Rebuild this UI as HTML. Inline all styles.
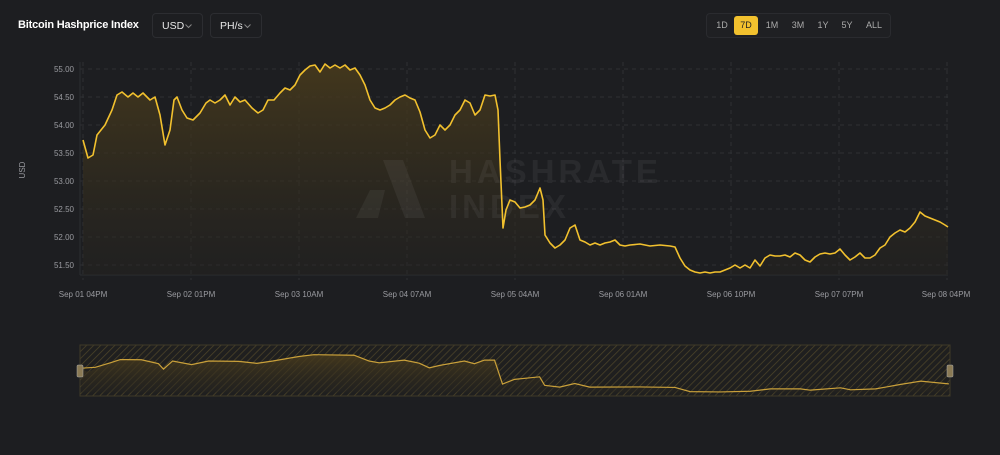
<!DOCTYPE html>
<html><head><meta charset="utf-8"><style>
body{margin:0;width:1000px;height:455px;background:#1d1e21;font-family:"Liberation Sans",sans-serif;overflow:hidden;position:relative;color:#fff}
.t{position:absolute;left:18px;top:19px;font-size:11px;font-weight:bold;letter-spacing:-0.2px}
.dd{position:absolute;top:13px;height:25px;border:1px solid #2c2d31;border-radius:4px;font-size:10.5px;line-height:24px;color:#e8e8e8;padding-left:9px;box-sizing:border-box}
.dd svg{position:absolute;right:10px;top:10px}
.rg{position:absolute;left:706px;top:13px;width:185px;height:25px;border:1px solid #2a2b2f;border-radius:4px;box-sizing:border-box;background:#1f2023}
.rg div{position:absolute;top:2px;height:19px;line-height:19px;font-size:9px;color:#aaa;text-align:center}
.rg .a{background:#f2c12e;color:#222;border-radius:3px}
</style></head><body>
<div class="t">Bitcoin Hashprice Index</div>
<div class="dd" style="left:152px;width:51px">USD<svg width="7" height="5"><polyline points="0.5,0.5 3.5,3.5 6.5,0.5" fill="none" stroke="#888" stroke-width="1"/></svg></div>
<div class="dd" style="left:210px;width:52px">PH/s<svg width="7" height="5"><polyline points="0.5,0.5 3.5,3.5 6.5,0.5" fill="none" stroke="#888" stroke-width="1"/></svg></div>
<div class="rg">
<div style="left:5px;width:20px">1D</div>
<div class="a" style="left:27px;width:24px">7D</div>
<div style="left:55px;width:20px">1M</div>
<div style="left:80px;width:22px">3M</div>
<div style="left:106px;width:20px">1Y</div>
<div style="left:130px;width:20px">5Y</div>
<div style="left:154px;width:26px">ALL</div>
</div>
<svg width="1000" height="455" style="position:absolute;left:0;top:0" font-family="Liberation Sans, sans-serif">
<defs>
<linearGradient id="g" x1="0" y1="0" x2="0" y2="1"><stop offset="0" stop-color="#4a3c1c" stop-opacity="0.85"/><stop offset="1" stop-color="#26241f" stop-opacity="0.4"/></linearGradient>
<pattern id="h" width="5" height="5" patternUnits="userSpaceOnUse" patternTransform="rotate(45)"><rect width="5" height="5" fill="#1f1f1f"/><line x1="0" y1="0" x2="0" y2="5" stroke="#4d4429" stroke-width="1.5"/></pattern>
<pattern id="h2" width="5" height="5" patternUnits="userSpaceOnUse" patternTransform="rotate(45)"><rect width="5" height="5" fill="#3f351c"/><line x1="0" y1="0" x2="0" y2="5" stroke="#5a4b24" stroke-width="1.5"/></pattern>
</defs>
<g stroke="#2f3034" stroke-dasharray="4,4" stroke-width="1">
<line x1="80" x2="948" y1="69" y2="69"/><line x1="80" x2="948" y1="97" y2="97"/><line x1="80" x2="948" y1="125" y2="125"/><line x1="80" x2="948" y1="153" y2="153"/><line x1="80" x2="948" y1="181" y2="181"/><line x1="80" x2="948" y1="209" y2="209"/><line x1="80" x2="948" y1="237" y2="237"/><line x1="80" x2="948" y1="265" y2="265"/>
<line x1="83" x2="83" y1="62" y2="280"/><line x1="191" x2="191" y1="62" y2="280"/><line x1="299" x2="299" y1="62" y2="280"/><line x1="407" x2="407" y1="62" y2="280"/><line x1="515" x2="515" y1="62" y2="280"/><line x1="623" x2="623" y1="62" y2="280"/><line x1="731" x2="731" y1="62" y2="280"/><line x1="839" x2="839" y1="62" y2="280"/><line x1="947" x2="947" y1="62" y2="280"/>
</g>
<line x1="80" x2="80" y1="62" y2="275" stroke="#2c2d31"/><line x1="80" x2="948" y1="275" y2="275" stroke="#2c2d31"/>
<g fill="#9a9ba0" font-size="8" text-anchor="end">
<text x="74" y="72">55.00</text><text x="74" y="100">54.50</text><text x="74" y="128">54.00</text><text x="74" y="156">53.50</text><text x="74" y="184">53.00</text><text x="74" y="212">52.50</text><text x="74" y="240">52.00</text><text x="74" y="268">51.50</text>
</g>
<text x="25" y="170" fill="#9a9ba0" font-size="8" text-anchor="middle" transform="rotate(-90 25 170)">USD</text>
<g fill="#9a9ba0" font-size="8" text-anchor="middle">
<text x="83" y="297">Sep 01 04PM</text><text x="191" y="297">Sep 02 01PM</text><text x="299" y="297">Sep 03 10AM</text><text x="407" y="297">Sep 04 07AM</text><text x="515" y="297">Sep 05 04AM</text><text x="623" y="297">Sep 06 01AM</text><text x="731" y="297">Sep 06 10PM</text><text x="839" y="297">Sep 07 07PM</text><text x="946" y="297">Sep 08 04PM</text>
</g>
<path id="fillp" fill="url(#g)" d="M83,275 L83,140 88,158 93,155 97,135 105,125 112,110 117,95 122,92 128,97 133,93 138,97 143,93 150,100 155,97 160,115 165,145 170,130 174,100 177,97 182,110 187,118 193,120 200,113 206,103 210,100 215,103 220,100 225,95 230,105 235,97 240,102 245,100 252,108 258,113 263,110 268,100 274,100 280,93 285,88 290,90 295,85 300,75 305,70 310,66 315,65 320,72 325,64 330,68 335,65 340,68 345,65 350,70 355,68 360,75 365,85 370,100 375,108 380,110 385,108 390,105 395,100 400,97 405,95 410,98 415,100 420,112 425,130 430,138 435,135 440,125 445,130 450,125 455,115 460,110 465,100 470,103 475,115 480,110 485,95 490,96 495,95 498,110 500,160 503,228 506,210 510,200 515,202 520,208 525,207 530,205 535,200 540,188 543,200 545,235 550,243 555,248 560,245 565,240 570,228 575,225 580,240 585,242 590,245 595,243 600,245 605,243 610,242 615,240 620,245 625,246 630,245 640,244 650,246 660,245 670,246 675,247 680,258 685,266 690,270 695,272 700,273 705,272 710,273 715,272 720,272 725,270 730,268 735,265 740,268 745,265 750,268 755,260 760,266 765,258 770,255 775,256 780,256 785,255 790,257 795,253 800,255 805,260 810,262 815,257 820,254 825,253 830,254 835,253 840,249 845,255 850,260 855,257 860,253 865,258 870,258 875,255 880,248 885,245 890,237 895,233 900,230 905,232 910,228 915,222 920,212 925,216 930,218 935,220 940,222 945,225 948,227 L948,275 Z"/>
<g opacity="0.05" fill="#fff">
<path d="M383,160 L403,160 L425,218 L405,218 Z M370,190 L385,190 L378,218 L356,218 Z"/>
<text x="449" y="183" font-size="33" font-weight="bold" letter-spacing="4">HASHRATE</text>
<text x="449" y="218" font-size="33" font-weight="bold" letter-spacing="4">INDEX</text>
</g>
<path fill="none" stroke="#f2c12e" stroke-width="1.6" stroke-linejoin="round" d="M83,140 88,158 93,155 97,135 105,125 112,110 117,95 122,92 128,97 133,93 138,97 143,93 150,100 155,97 160,115 165,145 170,130 174,100 177,97 182,110 187,118 193,120 200,113 206,103 210,100 215,103 220,100 225,95 230,105 235,97 240,102 245,100 252,108 258,113 263,110 268,100 274,100 280,93 285,88 290,90 295,85 300,75 305,70 310,66 315,65 320,72 325,64 330,68 335,65 340,68 345,65 350,70 355,68 360,75 365,85 370,100 375,108 380,110 385,108 390,105 395,100 400,97 405,95 410,98 415,100 420,112 425,130 430,138 435,135 440,125 445,130 450,125 455,115 460,110 465,100 470,103 475,115 480,110 485,95 490,96 495,95 498,110 500,160 503,228 506,210 510,200 515,202 520,208 525,207 530,205 535,200 540,188 543,200 545,235 550,243 555,248 560,245 565,240 570,228 575,225 580,240 585,242 590,245 595,243 600,245 605,243 610,242 615,240 620,245 625,246 630,245 640,244 650,246 660,245 670,246 675,247 680,258 685,266 690,270 695,272 700,273 705,272 710,273 715,272 720,272 725,270 730,268 735,265 740,268 745,265 750,268 755,260 760,266 765,258 770,255 775,256 780,256 785,255 790,257 795,253 800,255 805,260 810,262 815,257 820,254 825,253 830,254 835,253 840,249 845,255 850,260 855,257 860,253 865,258 870,258 875,255 880,248 885,245 890,237 895,233 900,230 905,232 910,228 915,222 920,212 925,216 930,218 935,220 940,222 945,225 948,227"/>
<rect x="80" y="345" width="870" height="51" fill="url(#h)" stroke="#3f3a28"/>
<g transform="translate(-2,343) scale(1.003,0.18)">
<use href="#fillp" fill="url(#h2)"/>
</g>
<g transform="translate(-2,343) scale(1.003,0.18)">
<path fill="none" stroke="#c9a03a" stroke-width="1.2" vector-effect="non-scaling-stroke" d="M83,140 97,135 112,110 122,92 143,93 160,115 165,145 174,100 193,120 210,100 240,102 258,113 274,100 300,75 315,65 355,68 370,100 380,110 405,95 420,112 430,138 440,125 465,100 475,115 485,95 495,95 503,228 515,202 540,188 545,235 560,245 575,225 590,245 640,244 675,247 690,270 720,272 750,268 770,255 800,255 810,262 840,249 850,260 875,255 900,230 920,212 948,227"/>
</g>
<rect x="77" y="365" width="6" height="12" rx="1" fill="#8a7a55" stroke="#aaa" stroke-width="0.5"/>
<rect x="947" y="365" width="6" height="12" rx="1" fill="#8a7a55" stroke="#aaa" stroke-width="0.5"/>
</svg>
</body></html>
